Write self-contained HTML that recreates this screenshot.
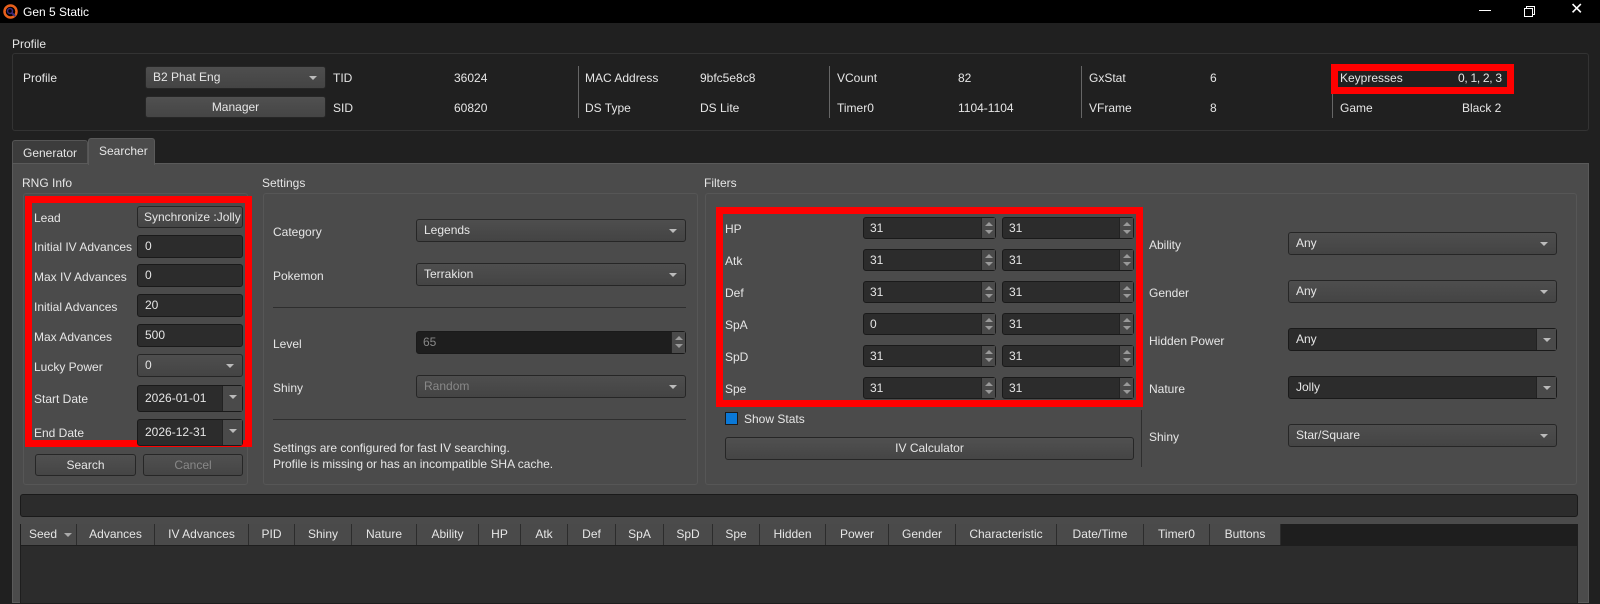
<!DOCTYPE html>
<html><head><meta charset="utf-8">
<style>
*{box-sizing:border-box;margin:0;padding:0}
body{width:1600px;height:600px;overflow:hidden;background:#202020;font-family:"Liberation Sans",sans-serif;font-size:12px;color:#e6e6e6;position:relative}
.a{position:absolute}
.t{position:absolute;line-height:14px;white-space:nowrap}
.inp{position:absolute;background:#2c2c2c;border:1px solid #1a1a1a;border-radius:3px;padding-left:7px;line-height:20px;height:23px}
.cb{position:absolute;background:linear-gradient(#4e4e4e,#444);border:1px solid #262626;border-radius:3px;padding-left:7px;line-height:21px;height:23px}
.cb:after{content:"";position:absolute;right:8px;top:9px;border-left:4px solid transparent;border-right:4px solid transparent;border-top:4px solid #bbb}
.btn{position:absolute;background:linear-gradient(#505050,#454545);border:1px solid #262626;border-radius:3px;text-align:center;line-height:20px}
.grp{position:absolute;border:1px solid #565656;border-radius:3px}
.red{position:absolute;border:7px solid #f00}
.spin{position:absolute;background:#2c2c2c;border:1px solid #1a1a1a;border-radius:3px;padding-left:6px;line-height:20px;height:22px}
.spin i{position:absolute;right:0;top:0;width:14px;height:20px;background:#4a4a4a;border-left:1px solid #222}
.spin i:before{content:"";position:absolute;left:3px;top:4px;border-left:4px solid transparent;border-right:4px solid transparent;border-bottom:4px solid #999}
.spin i:after{content:"";position:absolute;left:3px;top:12px;border-left:4px solid transparent;border-right:4px solid transparent;border-top:4px solid #999}
.dd{position:absolute;background:#2c2c2c;border:1px solid #1a1a1a;border-radius:3px;padding-left:7px;line-height:21px;height:23px}
.dd i{position:absolute;right:0;top:0;width:20px;height:21px;background:#4a4a4a;border-left:1px solid #222}
.dd i:after{content:"";position:absolute;left:6px;top:9px;border-left:4px solid transparent;border-right:4px solid transparent;border-top:4px solid #bbb}
.th{position:absolute;top:524px;height:21px;background:#4a4a4a;border-right:1px solid #2c2c2c;text-align:center;line-height:21px}
</style></head><body>
<div class="a" style="left:0;top:0;width:1600px;height:23px;background:#000"></div>
<svg class="a" style="left:3px;top:4px" width="15" height="15" viewBox="0 0 15 15"><circle cx="7.5" cy="7.5" r="6" fill="none" stroke="#e8601c" stroke-width="2.5"/><circle cx="7" cy="7" r="2.5" fill="none" stroke="#3a2a7a" stroke-width="1.5"/><line x1="9" y1="9" x2="12" y2="12" stroke="#3a2a7a" stroke-width="2"/></svg>
<div class="t" style="left:23px;top:5px;color:#fff">Gen 5 Static</div>
<div class="a" style="left:1479px;top:10px;width:12px;height:1px;background:#fff"></div>
<div class="a" style="left:1526px;top:6px;width:9px;height:9px;border:1px solid #fff"></div>
<div class="a" style="left:1524px;top:8px;width:9px;height:9px;border:1px solid #fff;background:#000"></div>
<div class="t" style="left:1570px;top:3px;color:#fff;font-size:16px">✕</div>

<div class="t" style="left:12px;top:37px">Profile</div>
<div class="a" style="left:12px;top:53px;width:1577px;height:78px;border:1px solid #333;border-radius:3px"></div>
<div class="t" style="left:23px;top:71px">Profile</div>
<div class="cb" style="left:145px;top:66px;width:181px">B2 Phat Eng</div>
<div class="btn" style="left:145px;top:96px;width:181px;height:22px">Manager</div>
<div class="t" style="left:333px;top:71px">TID</div><div class="t" style="left:333px;top:101px">SID</div>
<div class="t" style="left:454px;top:71px">36024</div><div class="t" style="left:454px;top:101px">60820</div>
<div class="a" style="left:578px;top:66px;width:1px;height:52px;background:#666"></div>
<div class="t" style="left:585px;top:71px">MAC Address</div><div class="t" style="left:585px;top:101px">DS Type</div>
<div class="t" style="left:700px;top:71px">9bfc5e8c8</div><div class="t" style="left:700px;top:101px">DS Lite</div>
<div class="a" style="left:829px;top:66px;width:1px;height:52px;background:#666"></div>
<div class="t" style="left:837px;top:71px">VCount</div><div class="t" style="left:837px;top:101px">Timer0</div>
<div class="t" style="left:958px;top:71px">82</div><div class="t" style="left:958px;top:101px">1104-1104</div>
<div class="a" style="left:1081px;top:66px;width:1px;height:52px;background:#666"></div>
<div class="t" style="left:1089px;top:71px">GxStat</div><div class="t" style="left:1089px;top:101px">VFrame</div>
<div class="t" style="left:1210px;top:71px">6</div><div class="t" style="left:1210px;top:101px">8</div>
<div class="a" style="left:1332px;top:94px;width:1px;height:24px;background:#666"></div>
<div class="red" style="left:1331px;top:64px;width:183px;height:30px"></div>
<div class="t" style="left:1340px;top:71px">Keypresses</div><div class="t" style="left:1340px;top:101px">Game</div>
<div class="t" style="left:1458px;top:71px;letter-spacing:-0.3px">0, 1, 2, 3</div><div class="t" style="left:1462px;top:101px">Black 2</div>

<div class="a" style="left:12px;top:140px;width:76px;height:24px;background:#3c3c3c;border:1px solid #555;border-bottom:none;border-radius:3px 3px 0 0"></div>
<div class="t" style="left:23px;top:146px">Generator</div>
<div class="a" style="left:12px;top:163px;width:1577px;height:440px;background:#4b4b4b;border:1px solid #5a5a5a"></div>
<div class="a" style="left:88px;top:138px;width:67px;height:27px;background:#4b4b4b;border:1px solid #5a5a5a;border-bottom:none;border-radius:3px 3px 0 0"></div>
<div class="t" style="left:99px;top:144px">Searcher</div>

<div class="t" style="left:22px;top:176px">RNG Info</div>
<div class="grp" style="left:23px;top:193px;width:225px;height:292px"></div>
<div class="red" style="left:25px;top:196px;width:227px;height:251px"></div>
<div class="t" style="left:34px;top:211px">Lead</div>
<div class="btn" style="left:137px;top:206px;width:106px;height:22px;text-align:left;padding-left:6px;overflow:hidden">Synchronize :Jolly</div>
<div class="t" style="left:34px;top:240px">Initial IV Advances</div><div class="inp" style="left:137px;top:235px;width:106px">0</div>
<div class="t" style="left:34px;top:270px">Max IV Advances</div><div class="inp" style="left:137px;top:264px;width:106px">0</div>
<div class="t" style="left:34px;top:300px">Initial Advances</div><div class="inp" style="left:137px;top:294px;width:106px">20</div>
<div class="t" style="left:34px;top:330px">Max Advances</div><div class="inp" style="left:137px;top:324px;width:106px">500</div>
<div class="t" style="left:34px;top:360px">Lucky Power</div><div class="cb" style="left:137px;top:354px;width:106px">0</div>
<div class="t" style="left:34px;top:392px">Start Date</div><div class="dd" style="left:137px;top:385px;width:106px;height:27px;line-height:25px">2026-01-01<i style="height:25px"></i></div>
<div class="t" style="left:34px;top:426px">End Date</div><div class="dd" style="left:137px;top:419px;width:106px;height:27px;line-height:25px">2026-12-31<i style="height:25px"></i></div>
<div class="btn" style="left:35px;top:454px;width:101px;height:22px">Search</div>
<div class="btn" style="left:143px;top:454px;width:100px;height:22px;color:#888">Cancel</div>

<div class="t" style="left:262px;top:176px">Settings</div>
<div class="grp" style="left:263px;top:193px;width:435px;height:292px"></div>
<div class="t" style="left:273px;top:225px">Category</div><div class="cb" style="left:416px;top:219px;width:270px">Legends</div>
<div class="t" style="left:273px;top:269px">Pokemon</div><div class="cb" style="left:416px;top:263px;width:270px">Terrakion</div>
<div class="a" style="left:273px;top:307px;width:413px;height:1px;background:#2e2e2e"></div>
<div class="t" style="left:273px;top:337px">Level</div>
<div class="spin" style="left:416px;top:331px;width:270px;height:23px;background:#1e1e1e;color:#888">65<i style="height:21px"></i></div>
<div class="t" style="left:273px;top:381px">Shiny</div><div class="cb" style="left:416px;top:375px;width:270px;color:#888">Random</div>
<div class="a" style="left:273px;top:419px;width:413px;height:1px;background:#2e2e2e"></div>
<div class="t" style="left:273px;top:441px">Settings are configured for fast IV searching.</div>
<div class="t" style="left:273px;top:457px">Profile is missing or has an incompatible SHA cache.</div>

<div class="t" style="left:704px;top:176px">Filters</div>
<div class="grp" style="left:705px;top:193px;width:872px;height:292px"></div>
<div class="red" style="left:716px;top:207px;width:427px;height:200px"></div>
<div class="t" style="left:725px;top:222px">HP</div><div class="spin" style="left:863px;top:217px;width:133px">31<i></i></div><div class="spin" style="left:1002px;top:217px;width:132px">31<i></i></div>
<div class="t" style="left:725px;top:254px">Atk</div><div class="spin" style="left:863px;top:249px;width:133px">31<i></i></div><div class="spin" style="left:1002px;top:249px;width:132px">31<i></i></div>
<div class="t" style="left:725px;top:286px">Def</div><div class="spin" style="left:863px;top:281px;width:133px">31<i></i></div><div class="spin" style="left:1002px;top:281px;width:132px">31<i></i></div>
<div class="t" style="left:725px;top:318px">SpA</div><div class="spin" style="left:863px;top:313px;width:133px">0<i></i></div><div class="spin" style="left:1002px;top:313px;width:132px">31<i></i></div>
<div class="t" style="left:725px;top:350px">SpD</div><div class="spin" style="left:863px;top:345px;width:133px">31<i></i></div><div class="spin" style="left:1002px;top:345px;width:132px">31<i></i></div>
<div class="t" style="left:725px;top:382px">Spe</div><div class="spin" style="left:863px;top:377px;width:133px">31<i></i></div><div class="spin" style="left:1002px;top:377px;width:132px">31<i></i></div>
<div class="a" style="left:725px;top:412px;width:13px;height:13px;background:#0a78d7;border:1px solid #1a1a1a"></div>
<div class="t" style="left:744px;top:412px">Show Stats</div>
<div class="btn" style="left:725px;top:437px;width:409px;height:23px">IV Calculator</div>
<div class="a" style="left:1141px;top:410px;width:1px;height:57px;background:#2e2e2e"></div>
<div class="t" style="left:1149px;top:238px">Ability</div><div class="cb" style="left:1288px;top:232px;width:269px">Any</div>
<div class="t" style="left:1149px;top:286px">Gender</div><div class="cb" style="left:1288px;top:280px;width:269px">Any</div>
<div class="t" style="left:1149px;top:334px">Hidden Power</div><div class="dd" style="left:1288px;top:328px;width:269px">Any<i></i></div>
<div class="t" style="left:1149px;top:382px">Nature</div><div class="dd" style="left:1288px;top:376px;width:269px">Jolly<i></i></div>
<div class="t" style="left:1149px;top:430px">Shiny</div><div class="cb" style="left:1288px;top:424px;width:269px">Star/Square</div>

<div class="a" style="left:20px;top:494px;width:1558px;height:23px;background:#2c2c2c;border:1px solid #1a1a1a;border-radius:3px"></div>
<div class="a" style="left:20px;top:524px;width:1558px;height:80px;background:#2c2c2c;border:1px solid #1e1e1e"></div>
<div class="a" style="left:21px;top:524px;width:1557px;height:22px;background:#1e1e1e"></div>
<div class="th" style="left:21px;width:56px;text-align:left;padding-left:8px">Seed</div>
<div class="a" style="left:64px;top:533px;border-left:4px solid transparent;border-right:4px solid transparent;border-top:4px solid #aaa"></div>
<div class="th" style="left:77px;width:78px">Advances</div>
<div class="th" style="left:155px;width:94px">IV Advances</div>
<div class="th" style="left:249px;width:46px">PID</div>
<div class="th" style="left:295px;width:57px">Shiny</div>
<div class="th" style="left:352px;width:65px">Nature</div>
<div class="th" style="left:417px;width:62px">Ability</div>
<div class="th" style="left:479px;width:42px">HP</div>
<div class="th" style="left:521px;width:47px">Atk</div>
<div class="th" style="left:568px;width:48px">Def</div>
<div class="th" style="left:616px;width:48px">SpA</div>
<div class="th" style="left:664px;width:49px">SpD</div>
<div class="th" style="left:713px;width:47px">Spe</div>
<div class="th" style="left:760px;width:66px">Hidden</div>
<div class="th" style="left:826px;width:63px">Power</div>
<div class="th" style="left:889px;width:67px">Gender</div>
<div class="th" style="left:956px;width:101px">Characteristic</div>
<div class="th" style="left:1057px;width:87px">Date/Time</div>
<div class="th" style="left:1144px;width:66px">Timer0</div>
<div class="th" style="left:1210px;width:71px">Buttons</div>
</body></html>
